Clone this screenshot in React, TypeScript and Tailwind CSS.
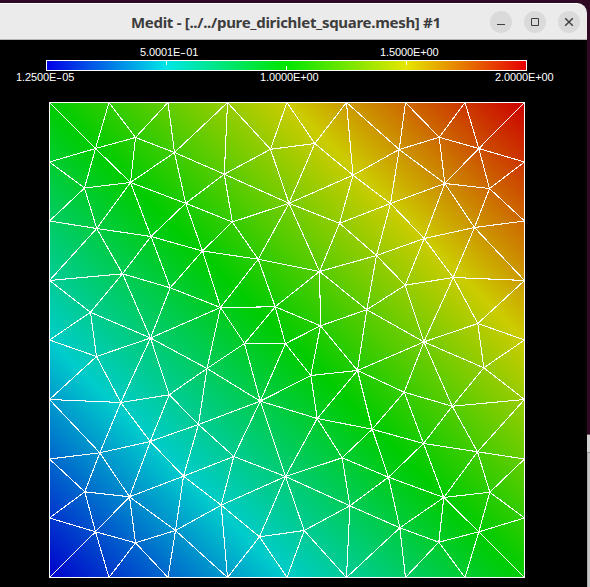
import React from "react";

type Point = [number, number];

// Boundary nodes, counted from the top-left corner of each side.
const xs = [49.5, 109, 168, 227.5, 287, 346.5, 405.5, 465, 524.5];
const ys = [102.5, 162, 221, 280.5, 340, 399.5, 459, 518, 577.5];

const nodes: Record<string, Point> = {
  A: [95.5, 148.5], B: [135.5, 137.5], C: [174.5, 152.5], D: [130.5, 182.5], E: [84.5, 188],
  F: [96.7, 228.5], G: [185.7, 203.3], H: [151, 236.5], I: [202.5, 251], J: [224.3, 174.2],
  K: [270.5, 149.3], L: [314.8, 143.5], M: [289, 203.3], N: [232.3, 222], O: [258.2, 259.2],
  P: [353, 175.2], Q: [339.5, 223.3], R: [399.2, 149.5], S: [439.2, 137.3], T: [478.8, 148.5],
  U: [444.8, 183.5], V: [489.5, 188.5], W: [390.5, 203.5], X: [424.2, 238.5], Y: [474.5, 227.5],
  Z: [376.5, 255.5], a: [122.5, 273.8], b: [170.2, 287.8], c: [90.5, 312.3], d: [150.5, 338],
  e: [96.5, 356.5], f: [120.8, 402.5], g: [169.2, 394.8], h: [207, 368.5], i: [198.5, 424.5],
  j: [220.5, 307.5], k: [275.2, 306.8], l: [319.6, 271.5], m: [244.5, 343.5], n: [285.4, 343.7],
  o: [320.5, 325.8], p: [310.8, 375.5], q: [357.5, 370.5], r: [366.8, 309.7], s: [260.3, 401.2],
  t: [317.2, 418.5], u: [405.2, 285.2], v: [453.2, 277.5], w: [477.8, 323.5], x: [423.9, 341.9],
  y: [483.8, 367.8], z: [404.2, 392.2], aa: [452.2, 406.2], ab: [99.8, 452.8], ac: [150.2, 441.5],
  ad: [84.8, 491.8], ae: [129.5, 496.8], af: [95.5, 531.8], ag: [135.5, 542.8], ah: [183.5, 476.2],
  ai: [175.5, 530.5], aj: [233.8, 456.5], ak: [285.5, 476.5], al: [221.2, 505.2], am: [259.5, 536.8],
  an: [304.2, 530.5], ao: [342.2, 457.8], ap: [349.9, 505.8], aq: [372.2, 429.2], ar: [423.5, 443.5],
  as: [477.5, 451.8], at: [388.5, 477.2], au: [443.8, 497.5], av: [489.8, 492.2], aw: [399.8, 527.8],
  ax: [438.8, 542.2], ay: [478.8, 531.8],
};

for (let n = 0; n < 9; n++) {
  nodes["L" + n] = [xs[0], ys[n]];
  nodes["T" + n] = [xs[n], ys[0]];
  nodes["R" + n] = [xs[8], ys[n]];
  nodes["B" + n] = [xs[n], ys[8]];
}

// Each node followed by the neighbours it is joined to.
const fans = `
A:T0 T1 B D E L1|B:T1 T2 C D|C:T2 T3 J G D|D:E G H F|E:L1 L2 F|F:L2 H L3 a
G:H I J N|H:I a b|I:N O b j|J:T3 K M N|K:T3 T4 L M|L:T4 T5 P M|M:P Q N O l
N:O|O:l j k|P:T5 Q W R|Q:l W Z|R:T5 T6 S U W|S:T6 T7 T U|T:T7 T8 R1 V U
U:V Y X W|V:R1 R2 Y|W:X Z|X:Y Z u v|Y:R2 R3 v|Z:l u r|u:v x r|v:R3 w x
w:R3 R4 y x|x:y aa z q r|y:R4 R5 aa|aa:R5 as ar z|z:q aq ar|q:r aq t p o
r:l o|l:o k|o:p n k|k:n m j|j:m h d b|m:n s h|n:p s|p:t s|s:t aj ak i h
t:aq ao ak|h:i g d|g:d i ac f|i:aj ah ac|d:a b f e c|c:L3 a e L4|e:f L5 L4
a:H b L3|f:ac ab L5|ab:L5 ac ae ad L6|ac:ah ae|ad:L6 L7 af ae
ae:ah ai ag af|af:L7 L8 B1 ag|ag:B1 B2 ai|ah:aj al ai|ai:al B3 B2
aj:ak al|al:ak am B3|ak:ao ap an am|am:an B4 B3|an:ap B5 B4|ao:aq at ap
ap:at aw B5|aq:ar at|ar:as au at|as:R5 R6 av au|at:au aw|au:av ay ax aw
av:R6 R7 ay|aw:ax B6 B5|ax:ay B7 B6|ay:R7 R8 B7`;

const meshPath = fans
  .trim()
  .split(/[|\n]/)
  .flatMap((fan) => {
    const [hub, rest] = fan.split(":");
    return rest.split(" ").map((k) => `M${nodes[hub].join(" ")}L${nodes[k].join(" ")}`);
  })
  .join("");

function Value({ mantissa, exponent, sign }: { mantissa: string; exponent: string; sign: "+" | "-" }) {
  return (
    <span className="whitespace-nowrap">
      {mantissa}E
      {sign === "-" ? <span className="inline-block w-[6px] origin-left scale-x-[1.6]">-</span> : <span>+</span>}
      {exponent}
    </span>
  );
}

function ColorScale() {
  return (
    <div className="flex h-[62px] shrink-0 flex-col text-[11px] leading-[13px] tracking-[-0.12px] text-white">
      <div className="mt-[6px] grid h-[13px] grid-cols-[240px_auto] pl-[140px]">
        <Value mantissa="5.0001" sign="-" exponent="01" />
        <Value mantissa="1.5000" sign="+" exponent="00" />
      </div>
      <div className="ml-[46px] mt-px h-[11px] w-[481px] shrink-0 border border-white bg-[linear-gradient(to_right,#0000e6,#00e6e6_25%,#00e600_50%,#e6e600_75%,#e60000)]">
        <div className="grid h-full grid-cols-[119px_120px_120px_120px]">
          <span />
          <span className="h-[4px] border-l border-white" />
          <span className="h-[4px] self-end border-l border-white" />
          <span className="h-[4px] border-l border-white" />
        </div>
      </div>
      <div className="grid h-[13px] grid-cols-[244px_235px_auto] pl-[16px]">
        <Value mantissa="1.2500" sign="-" exponent="05" />
        <Value mantissa="1.0000" sign="+" exponent="00" />
        <Value mantissa="2.0000" sign="+" exponent="00" />
      </div>
    </div>
  );
}

function Mesh() {
  return (
    <svg className="ml-[49px] block shrink-0" width="476" height="476" viewBox="49 102 476 476" shapeRendering="crispEdges">
      <defs>
        <linearGradient id="field" x1="0" y1="1" x2="1" y2="0">
          <stop offset="0" stopColor="#0000cc" />
          <stop offset="0.25" stopColor="#00cccc" />
          <stop offset="0.5" stopColor="#00cc00" />
          <stop offset="0.75" stopColor="#cccc00" />
          <stop offset="1" stopColor="#cc0000" />
        </linearGradient>
      </defs>
      <rect x="49" y="102" width="476" height="476" fill="url(#field)" />
      <path d={meshPath} fill="none" stroke="#fff" strokeWidth="1.05" />
      <rect x="49.5" y="102.5" width="475" height="475" fill="none" stroke="#fff" />
    </svg>
  );
}

function WindowButton({ label, children }: { label: string; children: React.ReactNode }) {
  return (
    <button aria-label={label} className="flex size-[22px] items-center justify-center rounded-full bg-[#dadada]">
      <svg width="22" height="22" viewBox="0 0 22 22" fill="none" stroke="#3d3d3d">
        {children}
      </svg>
    </button>
  );
}

function TitleBar() {
  return (
    <header className="flex h-[37px] shrink-0 items-center rounded-tr-[10px] border-b border-[#b5b5b5] border-t border-t-white bg-[#ebebeb]">
      <h1 className="ml-[131px] w-[359px] whitespace-nowrap font-['Noto_Sans','Open_Sans',sans-serif] text-[15px] font-bold leading-[20px] tracking-[-0.3px] text-[#3d3d3d]">
        Medit - [../../pure_dirichlet_square.mesh] #1
      </h1>
      <div className="flex gap-[12px]">
        <WindowButton label="Minimize">
          <path d="M7 13.5h8" />
        </WindowButton>
        <WindowButton label="Maximize">
          <path d="M7.5 7.5h7v7h-7z" />
        </WindowButton>
        <WindowButton label="Close">
          <path d="M7.2 7.2l7.6 7.6M14.8 7.2l-7.6 7.6" strokeWidth="1.4" />
        </WindowButton>
      </div>
    </header>
  );
}

export default function App() {
  return (
    <div className="flex h-[587px] w-[590px] overflow-hidden bg-[#300a24] font-['Liberation_Sans',Arial,sans-serif]">
      <main className="mt-[3px] flex w-[587px] shrink-0 flex-col rounded-tr-[10px] bg-black">
        <TitleBar />
        <ColorScale />
        <Mesh />
      </main>
      <aside className="flex w-[3px] flex-col pt-[434px]">
        <div className="h-[19px] shrink-0 border-b border-t border-b-[#929292] border-t-[#6b5b66] bg-[#d2d2d2]" />
        <div className="grow border-l border-[#aaa] bg-[#c6c6c6]" />
      </aside>
    </div>
  );
}
